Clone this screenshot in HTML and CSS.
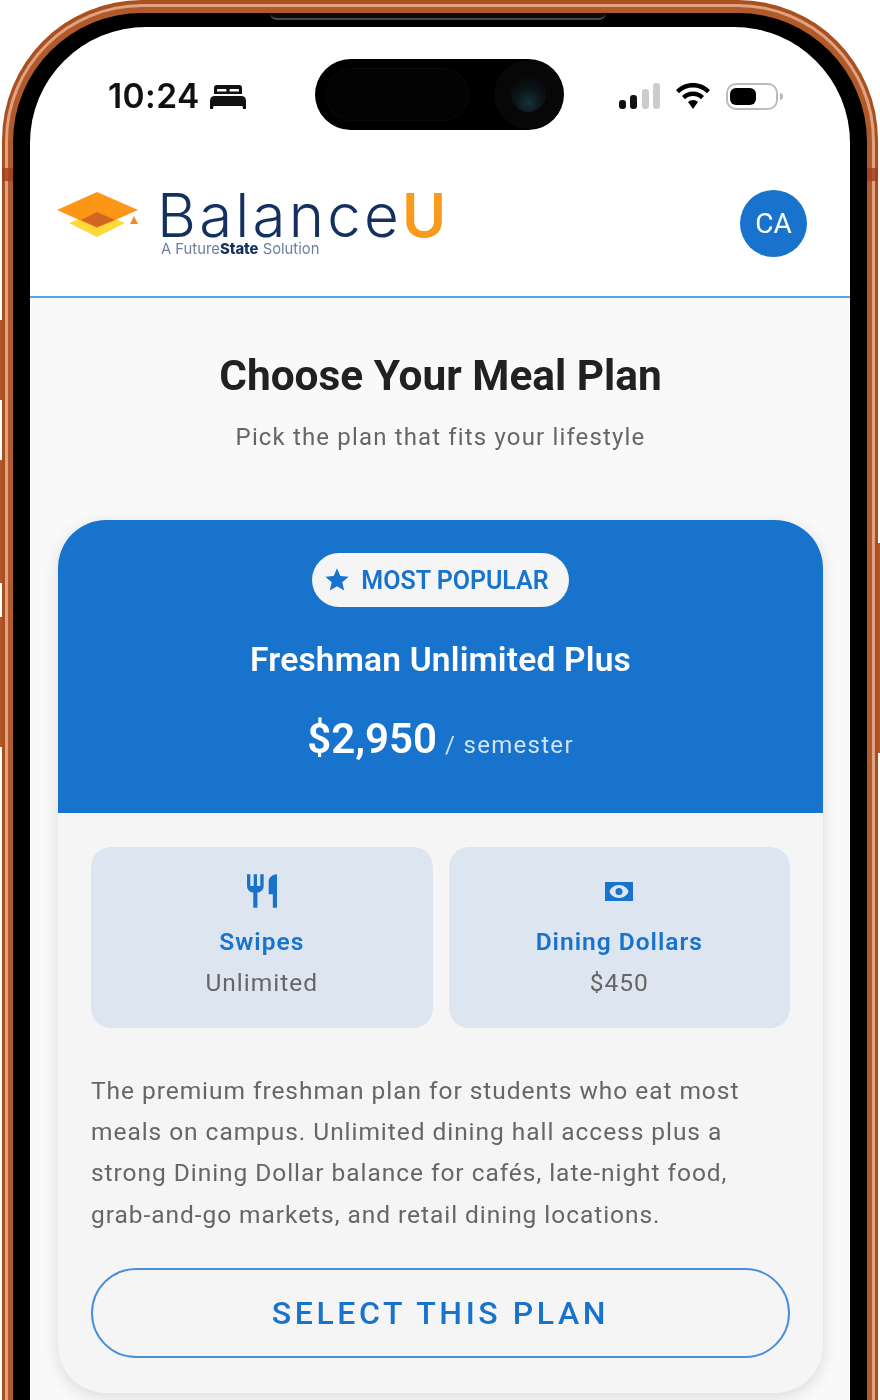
FILE: index.html
```html
<!DOCTYPE html>
<html lang="en">

<head>
  <meta charset="UTF-8">
  <meta name="viewport" content="width=device-width, initial-scale=1.0">
  <title>BalanceU - Choose Your Meal Plan</title>
  <link rel="stylesheet" href="styles.css">
</head>

<body>
  <div class="phone">
    <div class="frame-light">
      <div class="frame-inner">
        <div class="bezel">
          <div class="screen">

            <!-- Status bar -->
            <div class="status-bar">
              <div class="status-left">
                <span class="time">10:24</span>
                <svg class="bed" viewBox="0 0 36 25">
                  <path fill-rule="evenodd" d="M4 10V4q0-3 3-3h22q3 0 3 3v6zM7 7.500h9.500V6q0-1-1-1H8q-1 0-1 1zM19.500 7.500H29V6q0-1-1-1h-7.500q-1 0-1 1z" />
                  <path d="M0 17q0-5 5-5h26q5 0 5 5v8h-3l-.5-3h-29L3 25H0z" />
                </svg>
              </div>
              <div class="status-right">
                <div class="signal">
                  <span class="bar bar1"></span>
                  <span class="bar bar2"></span>
                  <span class="bar bar3 off"></span>
                  <span class="bar bar4 off"></span>
                </div>
                <svg class="wifi" viewBox="0 0 34 26">
                  <path d="M17 0C10.500 0 4.700 2.500 0 7l3 3.200C6.800 6.500 11.600 4.500 17 4.500s10.200 2 14 5.700L34 7C29.300 2.500 23.500 0 17 0z" />
                  <path d="M17 8.500c-4.300 0-8 1.600-11 4.500l3 3.200c2.200-2 4.900-3.200 8-3.200s5.800 1.200 8 3.200l3-3.200c-3-2.900-6.700-4.500-11-4.500z" />
                  <path d="M17 17c-2 0-3.700.7-5 2l5 7 5-7c-1.300-1.300-3-2-5-2z" />
                </svg>
                <div class="battery">
                  <div class="battery-body"><span class="battery-fill"></span></div>
                  <span class="battery-nub"></span>
                </div>
              </div>
            </div>

            <!-- Header -->
            <header class="app-header">
              <div class="logo">
                <svg class="logo-mark" viewBox="0 0 82 46">
                  <polygon points="12,31 40,20 68,31 40,45" fill="#ffd83a" />
                  <polygon points="0,18 40,0 81,18 40,36" fill="#fb9617" />
                  <polygon points="24,28 40,20 58,28 40,35" fill="#d26622" />
                  <polygon points="77,24 73,32 81,32" fill="#f08a28" />
                </svg>
                <div class="logo-text">
                  <div class="logo-name">Balance<span class="logo-u">U</span></div>
                  <div class="logo-tag">A Future<b>State</b> Solution</div>
                </div>
              </div>
              <div class="avatar">CA</div>
            </header>

            <main class="content">
              <h1 class="page-title">Choose Your Meal Plan</h1>
              <p class="page-sub">Pick the plan that fits your lifestyle</p>

              <div class="plan-card">
                <div class="plan-head">
                  <div class="badge">
                    <svg class="badge-star" viewBox="0 0 24 24">
                      <path d="M12 17.270L18.180 21l-1.640-7.030L22 9.240l-7.190-.610L12 2 9.190 8.630 2 9.240l5.460 4.730L5.820 21z" />
                    </svg>
                    MOST POPULAR
                  </div>
                  <h2 class="plan-name">Freshman Unlimited Plus</h2>
                  <div class="plan-price"><span class="amount">$2,950</span> <span class="per">/ semester</span></div>
                </div>

                <div class="plan-body">
                  <div class="stats">
                    <div class="stat">
                      <svg class="stat-icon" viewBox="0 0 24 24">
                        <path d="M11 9H9V2H7v7H5V2H3v7c0 2.120 1.660 3.840 3.750 3.970V22h2.500v-9.030C11.340 12.840 13 11.120 13 9V2h-2v7zm5-3v8h2.500v8H21V2c-2.760 0-5 2.240-5 4z" />
                      </svg>
                      <div class="stat-label">Swipes</div>
                      <div class="stat-value">Unlimited</div>
                    </div>
                    <div class="stat">
                      <svg class="stat-icon" viewBox="0 0 40 40">
                        <path fill-rule="evenodd" d="M6 11h28v19H6zM20 14c-5 0-8.500 3-9.500 6.500 1 3.500 4.500 6.500 9.500 6.500s8.500-3 9.500-6.500C28.500 17 25 14 20 14zm0 3a3.500 3.500 0 1 1 0 7 3.500 3.500 0 0 1 0-7z" />
                      </svg>
                      <div class="stat-label">Dining Dollars</div>
                      <div class="stat-value">$450</div>
                    </div>
                  </div>

                  <p class="plan-desc">The premium freshman plan for students who eat most meals on campus. Unlimited dining hall access plus a strong Dining Dollar balance for cafés, late-night food, grab-and-go markets, and retail dining locations.</p>

                  <button class="select-btn">SELECT THIS PLAN</button>
                </div>
              </div>
            </main>
          </div>
        </div>
      </div>
    </div>

    <!-- Things that sit on top of the frame -->
    <div class="speaker"></div>
    <div class="island">
      <span class="island-pill"></span>
      <span class="camera"><span class="lens"></span></span>
    </div>
    <span class="band band-left"></span>
    <span class="band band-right"></span>
    <span class="side-btn side-mute"></span>
    <span class="side-btn side-up"></span>
    <span class="side-btn side-down"></span>
    <span class="side-btn side-power"></span>
  </div>
</body>

</html>
```

FILE: styles.css
```css
* {
  box-sizing: border-box;
}

html,
body {
  margin: 0;
  height: 1400px;
  overflow: hidden;
  background: #fff;
}

body {
  font-family: Roboto, "Liberation Sans", sans-serif;
}

/* Phone frame */
.phone {
  position: relative;
  width: 876px;
  height: 1400px;
  margin-left: 2px;
  padding: 4px 3px 0;
  background: #a9501f;
  border-radius: 140px 140px 0 0;
  filter: blur(0.6px);
}

.frame-light {
  height: 100%;
  padding: 3px 3px 0;
  background: #e0a282;
  border-radius: 137px 137px 0 0;
}

.frame-inner {
  height: 100%;
  padding: 6px 5px 0;
  background: #b05a2b;
  border-radius: 134px 134px 0 0;
}

.bezel {
  height: 100%;
  padding: 14px 17px 0;
  background: #000;
  border-radius: 129px 129px 0 0;
}

.screen {
  display: flex;
  flex-direction: column;
  height: 100%;
  background: #fff;
  border-radius: 116px 116px 0 0;
  overflow: hidden;
}

.speaker {
  position: absolute;
  left: 268px;
  top: 13px;
  width: 336px;
  height: 7px;
  background: #0c0c0c;
  border-bottom: 2px solid #4a4a4a;
  border-radius: 0 0 14px 14px;
}

.island {
  position: absolute;
  left: 313px;
  top: 59px;
  width: 249px;
  height: 71px;
  background: #000;
  border-radius: 36px;
}

.island-pill {
  position: absolute;
  left: 12px;
  top: 10px;
  width: 141px;
  height: 51px;
  background: #030303;
  border-radius: 26px;
  box-shadow: 0 0 0 1px #0a0a0a;
}

.camera {
  position: absolute;
  right: 1px;
  top: 1px;
  width: 69px;
  height: 69px;
  background: #070707;
  border-radius: 50%;
}

.lens {
  position: absolute;
  left: 17px;
  top: 17px;
  width: 35px;
  height: 35px;
  border-radius: 50%;
  background: radial-gradient(circle at 50% 72%, #17323a 0, #0b1417 45%, #040405 100%);
}

.band {
  position: absolute;
  top: 168px;
  width: 11px;
  height: 13px;
  background: #a33f1d;
  opacity: 0.8;
}

.band-left {
  left: 0;
}

.band-right {
  right: 0;
}

.side-btn {
  position: absolute;
  width: 2px;
  background: #b5562a;
}

.side-mute {
  left: -2px;
  top: 320px;
  height: 80px;
}

.side-up {
  left: -2px;
  top: 460px;
  height: 123px;
}

.side-down {
  left: -2px;
  top: 617px;
  height: 130px;
}

.side-power {
  right: -2px;
  top: 543px;
  height: 210px;
}

/* Status bar */
.status-bar {
  display: flex;
  flex-shrink: 0;
  justify-content: space-between;
  align-items: center;
  height: 135px;
  padding: 3px 67px 0 78px;
}

.status-left {
  display: flex;
  align-items: center;
  gap: 10px;
}

.time {
  font-family: Inter, Roboto, sans-serif;
  font-size: 33.5px;
  font-weight: 600;
  color: #111;
  letter-spacing: 0.4px;
}

.bed {
  width: 36px;
  height: 25px;
  fill: #111;
}

.status-right {
  display: flex;
  align-items: center;
  gap: 16px;
}

.signal {
  display: flex;
  align-items: flex-end;
  gap: 4.5px;
  height: 26px;
}

.bar {
  width: 7px;
  background: #111;
  border-radius: 3px;
}

.bar1 {
  height: 9px;
}

.bar2 {
  height: 14px;
}

.bar3 {
  height: 20px;
}

.bar4 {
  height: 26px;
}

.off {
  background: #ccc;
}

.wifi {
  width: 34px;
  height: 26px;
  fill: #000;
}

.battery {
  display: flex;
  align-items: center;
  gap: 2px;
}

.battery-body {
  width: 52px;
  height: 27px;
  padding: 3px 2px;
  border: 2px solid #bbb;
  border-radius: 10px;
}

.battery-fill {
  display: block;
  width: 26px;
  height: 17px;
  background: #000;
  border-radius: 6px;
}

.battery-nub {
  width: 3px;
  height: 7px;
  background: #bbb;
  border-radius: 0 3px 3px 0;
}

/* App header */
.app-header {
  display: flex;
  flex-shrink: 0;
  justify-content: space-between;
  align-items: flex-start;
  padding: 28px 43px 39px 27px;
  border-bottom: 2px solid #5a9fe3;
}

.logo {
  display: flex;
  align-items: flex-start;
  gap: 18px;
}

.logo-mark {
  width: 82px;
  height: 46px;
  margin-top: 2px;
}

.logo-name {
  height: 51px;
  font-family: Inter, sans-serif;
  font-size: 60px;
  font-weight: 300;
  line-height: 50px;
  letter-spacing: 3.2px;
  color: #14305f;
}

.logo-u {
  font-weight: 600;
  letter-spacing: 0;
  color: #f79a1d;
}

.logo-tag {
  padding-left: 4px;
  font-family: Inter, sans-serif;
  font-size: 14.8px;
  line-height: 16px;
  color: #6d7f9f;
}

.logo-tag b {
  color: #14305f;
  font-weight: 800;
}

.avatar {
  display: flex;
  align-items: center;
  justify-content: center;
  width: 67px;
  height: 67px;
  background: #1873cc;
  border-radius: 50%;
  color: #fff;
  font-size: 28px;
}

/* Main content */
.content {
  flex: 1;
  padding: 54px 27px 0 28px;
  background: #f9f9f9;
}

.page-title {
  margin: 0;
  text-align: center;
  font-size: 42.4px;
  font-weight: 700;
  line-height: 48px;
  color: #212121;
}

.page-sub {
  margin: 23px 0 69px;
  text-align: center;
  font-size: 24px;
  line-height: 28px;
  letter-spacing: 1.15px;
  color: #666;
}

.plan-card {
  background: #f5f5f5;
  border-radius: 48px;
  box-shadow: 0 4px 16px rgba(0, 0, 0, 0.12);
  overflow: hidden;
}

.plan-head {
  display: flex;
  flex-direction: column;
  align-items: center;
  height: 293px;
  padding-top: 33px;
  background: #1873cc;
  color: #fff;
}

.badge {
  display: flex;
  align-items: center;
  gap: 10px;
  height: 54px;
  padding: 0 20px 0 11px;
  background: #f5f5f5;
  border-radius: 27px;
  color: #1873cc;
  font-size: 25px;
  font-weight: 600;
}

.badge-star {
  width: 28px;
  height: 28px;
  fill: #1873cc;
}

.plan-name {
  margin: 33px 0 0;
  font-size: 33.5px;
  font-weight: 600;
  line-height: 40px;
  letter-spacing: 0.2px;
}

.plan-price {
  margin-top: 31px;
  line-height: 56px;
}

.amount {
  font-size: 42px;
  font-weight: 600;
}

.per {
  margin-left: 4px;
  font-size: 24px;
  letter-spacing: 1.3px;
  opacity: 0.8;
}

.plan-body {
  padding: 34px 33px 35px;
}

.stats {
  display: grid;
  grid-template-columns: 1fr 1fr;
  gap: 16px;
}

.stat {
  display: flex;
  flex-direction: column;
  align-items: center;
  height: 181px;
  padding-top: 24px;
  background: #dce5f0;
  border-radius: 20px;
}

.stat-icon {
  flex-shrink: 0;
  width: 40px;
  height: 40px;
  fill: #1873cc;
}

.stat-label {
  margin-top: 15px;
  font-size: 24.5px;
  font-weight: 600;
  line-height: 32px;
  letter-spacing: 1px;
  color: #1873cc;
}

.stat-value {
  margin-top: 9px;
  font-size: 24.5px;
  line-height: 32px;
  letter-spacing: 1px;
  color: #666;
}

.plan-desc {
  margin: 42px 0 0;
  font-size: 24.5px;
  line-height: 41.2px;
  letter-spacing: 0.95px;
  color: #666;
}

.select-btn {
  display: block;
  width: 100%;
  height: 90px;
  margin-top: 33px;
  background: transparent;
  border: 2px solid #4a90d9;
  border-radius: 45px;
  color: #1873cc;
  font-family: Roboto, sans-serif;
  font-size: 32px;
  font-weight: 500;
  letter-spacing: 3.6px;
}
```
